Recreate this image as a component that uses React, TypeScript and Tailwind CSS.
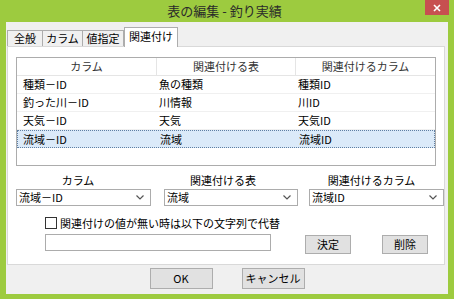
import React from 'react'

const font = "font-['Noto_Sans_CJK_JP','Noto_Sans',sans-serif]"

const rows = [
  ['種類－ID', '魚の種類', '種類ID'],
  ['釣った川－ID', '川情報', '川ID'],
  ['天気－ID', '天気', '天気ID'],
  ['流域－ID', '流域', '流域ID'],
]

const Chevron = () => (
  <svg width="8" height="5" viewBox="0 0 8 5" className="shrink-0">
    <polyline points="0.5,0.5 4,4 7.5,0.5" fill="none" stroke="#555" strokeWidth="1.2" />
  </svg>
)

const Combo = ({value, width}: {value: string; width: string}) => (
  <div className={`${width} h-[17px] bg-white border border-[#acacac] flex items-center justify-between pl-[2px] pr-[6px]`}>
    <span className="leading-none text-[#000]">{value}</span>
    <Chevron />
  </div>
)

const Btn = ({label, className}: {label: string; className: string}) => (
  <div
    className={`${className} bg-[#e1e1e1] border border-[#adadad] flex items-center justify-center text-[11px] leading-none text-[#000]`}
  >
    {label}
  </div>
)

const App = () => {
  return (
    <div className={`w-[454px] h-[299px] bg-[#9dcb3f] flex flex-col ${font}`}>
      <div className="h-[22px] flex shrink-0">
        <div className="flex-1" />
        <div className="text-[13px] leading-[22px] text-[#2a2a2a] whitespace-nowrap">表の編集 - 釣り実績</div>
        <div className="flex-1 flex justify-end pr-[5px]">
          <div className="w-[24px] h-[15px] bg-[#c75050] flex items-center justify-center">
            <svg width="8" height="8" viewBox="0 0 8 8">
              <path d="M1 1 L7 7 M7 1 L1 7" stroke="#fff" strokeWidth="1.6" />
            </svg>
          </div>
        </div>
      </div>

      <div className="flex-1 mx-[6px] mb-[5px] bg-[#f0f0f0] flex flex-col pt-[5px]">
        <div className="h-[19px] flex items-end pl-[1px] text-[11px] leading-none text-[#000]">
          <div className="w-[36px] h-[16px] border border-b-0 border-[#adadad] bg-[#f0f0f0] flex items-center justify-center">全般</div>
          <div className="w-[40px] h-[16px] border border-b-0 border-l-0 border-[#adadad] bg-[#f0f0f0] flex items-center justify-center">カラム</div>
          <div className="w-[41px] h-[16px] border border-b-0 border-l-0 border-[#adadad] bg-[#f0f0f0] flex items-center justify-center">値指定</div>
          <div className="w-[54px] h-[20px] -mb-px relative border border-b-0 border-[#adadad] bg-white flex items-center justify-center pb-[2px]">関連付け</div>
        </div>

        <div className="h-[219px] ml-[1px] mr-[3px] bg-white border border-[#d9d9d9] flex flex-col pt-[10px] text-[11px] leading-none text-[#000]">
          <div className="ml-[8px] w-[420px] h-[109px] border border-[#acacac] flex flex-col">
            <div className="h-[18px] flex border-b border-[#e5e5e5] text-[#333]">
              <div className="w-[140px] flex items-center justify-center border-r border-[#e5e5e5]">カラム</div>
              <div className="w-[139px] flex items-center justify-center border-r border-[#e5e5e5]">関連付ける表</div>
              <div className="flex-1 flex items-center justify-center">関連付けるカラム</div>
            </div>
            {rows.map((r, i) => {
              const sel = i === rows.length - 1
              return (
                <div
                  key={i}
                  className={`h-[18px] flex ${sel ? 'bg-[#dbeaf9] border border-dotted border-[#5f7fa3]' : 'border-b border-[#f0f0f0]'}`}
                >
                  <div className={`w-[140px] flex items-center ${sel ? 'pl-[5px]' : 'pl-[6px]'}`}>{r[0]}</div>
                  <div className="w-[139px] flex items-center pl-[2px]">{r[1]}</div>
                  <div className="flex-1 flex items-center pl-[2px]">{r[2]}</div>
                </div>
              )
            })}
          </div>

          <div className="mt-[9px] ml-[8px] flex gap-[13px]">
            <div className="w-[135px] pr-[11px] text-center">カラム</div>
            <div className="w-[134px] pr-[16px] text-center">関連付ける表</div>
            <div className="w-[135px] pr-[10px] text-center ml-[-2px]">関連付けるカラム</div>
          </div>

          <div className="mt-[3px] ml-[8px] flex">
            <Combo value="流域－ID" width="w-[135px]" />
            <div className="w-[13px]" />
            <Combo value="流域" width="w-[134px]" />
            <div className="w-[11px]" />
            <Combo value="流域ID" width="w-[135px]" />
          </div>

          <div className="mt-[10px] ml-[37px] h-[14px] flex items-center gap-[3px]">
            <div className="w-[12px] h-[12px] bg-white border border-[#333]" />
            <span>関連付けの値が無い時は以下の文字列で代替</span>
          </div>

          <div className="mt-[4px] ml-[37px] flex items-start">
            <div className="w-[226px] h-[17px] bg-white border border-[#acacac]" />
            <Btn label="決定" className="ml-[34px] mt-[1px] w-[46px] h-[19px]" />
            <Btn label="削除" className="ml-[31px] mt-[1px] w-[46px] h-[19px]" />
          </div>
        </div>

        <div className="mt-[3px] flex justify-center gap-[29px]">
          <Btn label="OK" className="w-[63px] h-[21px]" />
          <Btn label="キャンセル" className="w-[63px] h-[21px]" />
        </div>
      </div>
    </div>
  )
}

export default App
